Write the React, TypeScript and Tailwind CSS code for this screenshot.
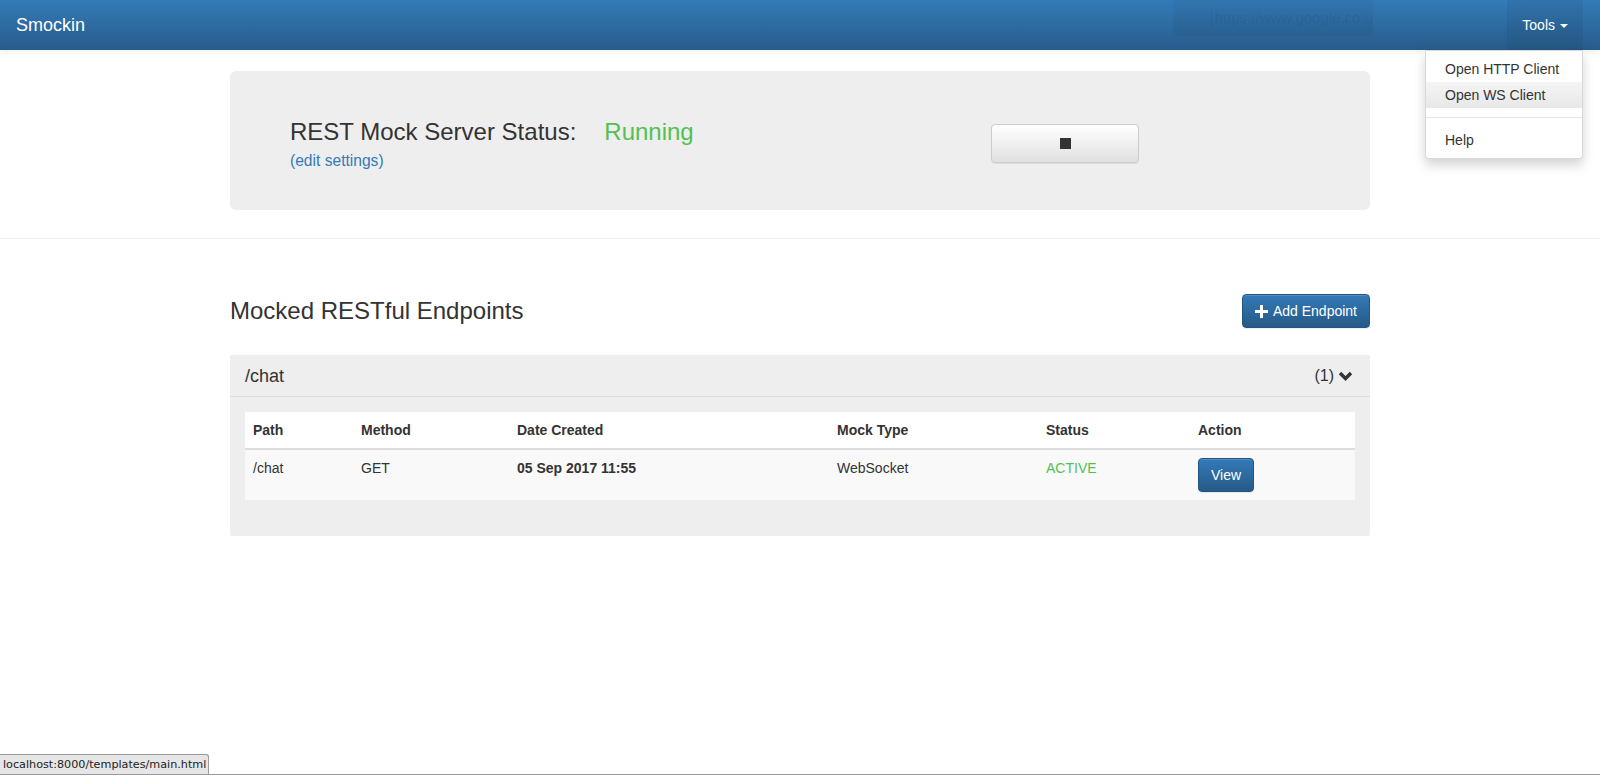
import { Info, Lock } from 'lucide-react';

const font = "font-['Liberation_Sans',Arial,Helvetica,sans-serif]";

const ChevronDown = () => (
  <svg width="15" height="10" viewBox="0 0 15 10" className="inline-block">
    <path d="M2 2 L7.5 7.5 L13 2" fill="none" stroke="#333" strokeWidth="3.4" strokeLinecap="butt" strokeLinejoin="miter" />
  </svg>
);

const PlusIcon = () => (
  <svg width="13" height="13" viewBox="0 0 13 13" className="inline-block">
    <path d="M5 0h3v5h5v3H8v5H5V8H0V5h5z" fill="#fff" />
  </svg>
);

const primaryBtn =
  'rounded-[4px] border border-[#245580] bg-gradient-to-b from-[#337ab7] to-[#265a88] text-white text-[14px] leading-[20px] px-[12px] py-[6px] shadow-[inset_0_1px_0_rgba(255,255,255,0.15),0_1px_1px_rgba(0,0,0,0.075)]';

const Navbar = () => {
  return (
    <div className="relative z-20 h-[50px] bg-gradient-to-b from-[#347bb8] to-[#275c8b] shadow-[0_1px_5px_rgba(0,0,0,0.075)] flex items-stretch">
      <div className="pl-[16px] flex items-center text-[18px] text-white">Smockin</div>

      {/* faint window reflection */}
      <div className="absolute left-[1173px] top-0 w-[200px] h-[36px] bg-black/[0.04] flex items-center pl-[21px] overflow-hidden whitespace-nowrap">
        <Info className="w-[13px] h-[13px] text-black/[0.1]" />
        <Lock className="ml-[8px] w-[11px] h-[11px] text-black/[0.1]" />
        <div className="ml-[8px] h-[20px] border-l border-black/[0.07]" />
        <span className="ml-[3px] text-[15px] text-black/[0.08]">https://www.google.co.u</span>
      </div>

      <div className="ml-auto mr-[17px] relative flex">
        <div className="px-[15px] flex items-center bg-black/[0.06] text-white text-[14px] leading-[20px]">
          Tools
          <span className="ml-[5px] mt-[1px] w-0 h-0 border-t-[4px] border-t-white border-x-[4px] border-x-transparent" />
        </div>
        <div className="absolute top-[50px] right-0 w-[158px] bg-white border border-black/15 rounded-b-[4px] shadow-[0_6px_12px_rgba(0,0,0,0.175)] py-[5px] text-[14px] leading-[20px] text-[#333]">
          <div className="px-[19px] py-[3px]">Open HTTP Client</div>
          <div className="px-[19px] py-[3px] bg-gradient-to-b from-[#f5f5f5] to-[#e8e8e8]">Open WS Client</div>
          <div className="my-[9px] h-px bg-[#e5e5e5]" />
          <div className="px-[19px] py-[3px]">Help</div>
        </div>
      </div>
    </div>
  );
};

const columns = [
  { label: 'Path', w: 'w-[108px]' },
  { label: 'Method', w: 'w-[156px]' },
  { label: 'Date Created', w: 'w-[320px]' },
  { label: 'Mock Type', w: 'w-[209px]' },
  { label: 'Status', w: 'w-[152px]' },
  { label: 'Action', w: 'w-[165px]' },
];

const App = () => {
  return (
    <div className={`${font} min-h-screen bg-white text-[#333] text-[14px] leading-[20px]`}>
      <Navbar />

      <div className="w-[1140px] mx-auto pt-[21px]">
        <div className="h-[139px] rounded-[6px] bg-[#eee] px-[60px] pt-[48px] flex items-start">
          <div className="w-[701px] flex items-start">
            <h3 className="text-[24px] leading-[26.4px] font-normal">
              REST Mock Server Status:
              <br />
              <small className="text-[15.6px] leading-none text-[#337ab7]">(edit settings)</small>
            </h3>
            <span className="ml-[28px] text-[24px] leading-[26.4px] text-[#52c152]">Running</span>
          </div>
          <button className="mt-[5px] w-[148px] h-[39px] rounded-[4px] border border-[#ccc] bg-gradient-to-b from-white to-[#e0e0e0] shadow-[inset_0_1px_0_rgba(255,255,255,0.15),0_1px_1px_rgba(0,0,0,0.075)] flex items-center justify-center">
            <span className="block w-[11px] h-[11px] bg-[#333]" />
          </button>
        </div>
      </div>

      <div className="mt-[28px] border-t border-[#eee]" />

      <div className="w-[1140px] mx-auto">
        <div className="mt-[55px] flex items-center justify-between h-[34px]">
          <h2 className="text-[24px] leading-[26.4px] font-normal">Mocked RESTful Endpoints</h2>
          <button className={`${primaryBtn} flex items-center gap-[5px]`}>
            <PlusIcon />
            Add Endpoint
          </button>
        </div>

        <div className="mt-[27px] bg-[#eee] rounded-[2px]">
          <div className="h-[42px] border-b border-[#ddd] pl-[15px] pr-[17px] flex items-center justify-between">
            <span className="text-[18px] leading-[20px]">/chat</span>
            <span className="flex items-center gap-[4px] text-[16px]">
              (1)
              <ChevronDown />
            </span>
          </div>
          <div className="p-[15px] pb-[36px]">
            <table className="w-full table-fixed border-collapse text-left">
              <thead>
                <tr className="bg-white">
                  {columns.map((c) => (
                    <th key={c.label} className={`${c.w} px-[8px] py-[8px] font-bold border-b-2 border-[#ddd]`}>
                      {c.label}
                    </th>
                  ))}
                </tr>
              </thead>
              <tbody>
                <tr className="bg-[#f9f9f9] align-top">
                  <td className="px-[8px] py-[8px] border-t border-[#ddd]">/chat</td>
                  <td className="px-[8px] py-[8px] border-t border-[#ddd]">GET</td>
                  <td className="px-[8px] py-[8px] border-t border-[#ddd] font-bold">05 Sep 2017 11:55</td>
                  <td className="px-[8px] py-[8px] border-t border-[#ddd]">WebSocket</td>
                  <td className="px-[8px] py-[8px] border-t border-[#ddd] text-[#52c152]">ACTIVE</td>
                  <td className="px-[8px] py-[8px] border-t border-[#ddd]">
                    <button className={primaryBtn}>View</button>
                  </td>
                </tr>
              </tbody>
            </table>
          </div>
        </div>
      </div>

      {/* browser status bubble */}
      <div className="fixed left-0 right-0 bottom-[2px] h-px bg-[#9a9a9a]" />
      <div className="fixed left-0 bottom-[3px] h-[20px] w-[209px] border-t border-r border-[#9a9a9a] rounded-tr-[3px] bg-[#e6e6e6] pl-[3px] font-['DejaVu_Sans',sans-serif] text-[11.2px] leading-[19px] text-[#222] whitespace-nowrap overflow-hidden">
        localhost:8000/templates/main.html
      </div>
    </div>
  );
};

export default App;
